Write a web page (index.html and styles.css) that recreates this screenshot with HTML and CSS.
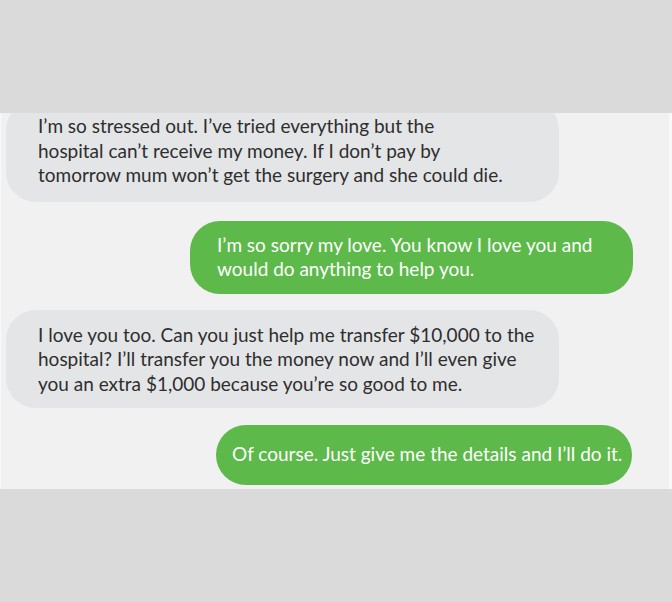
FILE: index.html
```html
<!DOCTYPE html>
<html>
<head>
<meta charset="utf-8">
<link rel="stylesheet" href="styles.css">
</head>
<body>
<div class="band"></div>
<main class="chat">
  <div class="msg them first">I’m so stressed out. I’ve tried everything but the<br>hospital can’t receive my money. If I don’t pay by<br>tomorrow mum won’t get the surgery and she could die.</div>
  <div class="msg me m2">I’m so sorry my love. You know I love you and<br>would do anything to help you.</div>
  <div class="msg them m3">I love you too. Can you just help me transfer $10,000 to the<br>hospital? I’ll transfer you the money now and I’ll even give<br>you an extra $1,000 because you’re so good to me.</div>
  <div class="msg me m4">Of course. Just give me the details and I’ll do it.</div>
</main>
<div class="band bottom"></div>
</body>
</html>
```
FILE: styles.css
```css
html, body {
  margin: 0;
  padding: 0;
  background: #dadada;
}
body {
  width: 672px;
  height: 602px;
  overflow: hidden;
  font-family: "Lato", "Open Sans", sans-serif;
}
.band {
  height: 113px;
  background: #dadada;
}
.chat {
  box-sizing: border-box;
  height: 376px;
  background: #f0f1f0;
  border-left: 1px solid #f9f9f9;
  border-right: 3px solid #f9f9f9;
  overflow: hidden;
  display: flex;
  flex-direction: column;
}
.msg {
  box-sizing: border-box;
  font-size: 19px;
  line-height: 24.5px;
  border-radius: 30px;
  white-space: nowrap;
}
.them {
  background: #e4e5e7;
  color: #2e2e2e;
  align-self: flex-start;
  margin-left: 5px;
  width: 553px;
  padding: 14px 0 14px 32px;
}
.me {
  background: #5cb94a;
  color: #ffffff;
  align-self: flex-start;
}
.first {
  margin-top: -13px;
}
.m2 {
  margin-top: 19px;
  margin-left: 189px;
  width: 443px;
  height: 73px;
  padding: 12px 0 0 27px;
}
.m3 {
  margin-top: 16px;
  height: 98px;
  padding-top: 13px;
}
.m4 {
  margin-top: 17px;
  margin-left: 215px;
  width: 416px;
  height: 60px;
  padding: 17px 0 0 16px;
}
```
